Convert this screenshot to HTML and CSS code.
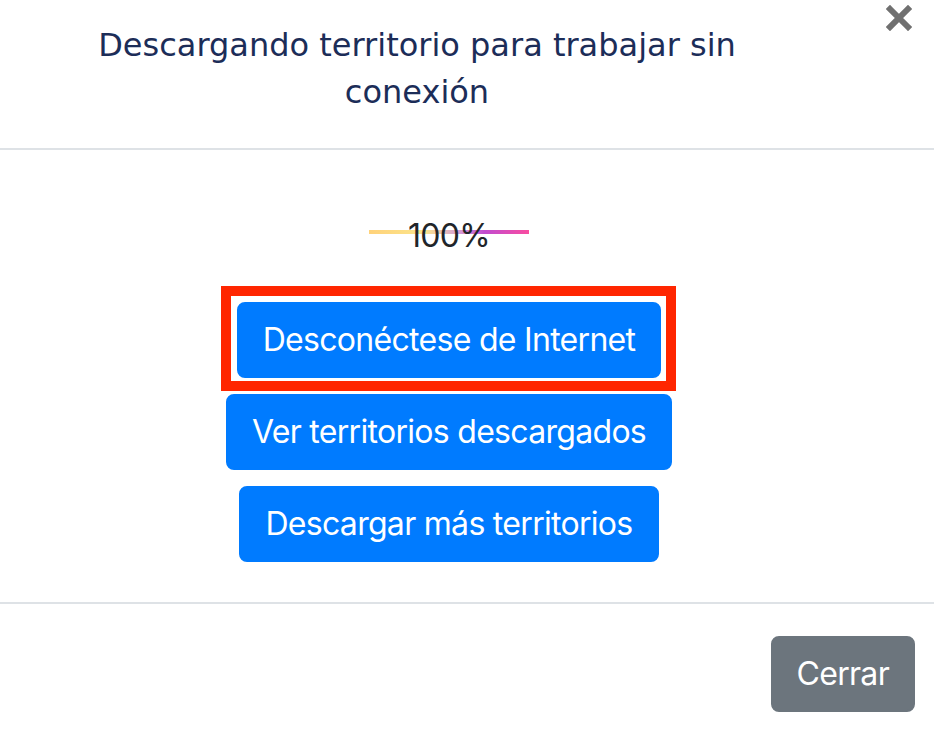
FILE: index.html
```html
<!DOCTYPE html>
<html lang="es">
<head>
<meta charset="utf-8">
<title>Descargando territorio</title>
<link rel="stylesheet" href="styles.css">
</head>
<body>
<div class="modal">
  <header class="modal-header">
    <h5 class="modal-title">Descargando territorio para trabajar sin conexión</h5>
    <button class="close" type="button" aria-label="Cerrar">
      <svg viewBox="0 0 26 26" width="26" height="26" aria-hidden="true">
        <path d="M4 4 L22 22 M22 4 L4 22" stroke="currentColor" stroke-width="6" stroke-linecap="square" fill="none"/>
      </svg>
    </button>
  </header>
  <main class="modal-body">
    <div class="progress-label">100%</div>
    <div class="actions">
      <button class="btn btn-primary btn-highlight" type="button">Desconéctese de Internet</button>
      <button class="btn btn-primary" type="button">Ver territorios descargados</button>
      <button class="btn btn-primary" type="button">Descargar más territorios</button>
    </div>
  </main>
  <footer class="modal-footer">
    <button class="btn btn-secondary" type="button">Cerrar</button>
  </footer>
</div>
</body>
</html>
```
FILE: styles.css
```css
html, body {
  margin: 0;
  padding: 0;
  background: #fff;
}

body {
  width: 934px;
  height: 730px;
  overflow: hidden;
  font-family: "Inter", "Roboto", "Liberation Sans", sans-serif;
  color: #212529;
}

.modal {
  width: 934px;
}

/* header: centred title with the dismiss cross on the right */
.modal-header {
  display: flex;
  align-items: flex-start;
  padding: 22px 0 32px 32px;
  border-bottom: 2px solid #dee2e6;
}

.modal-title {
  flex: 0 0 770px;
  box-sizing: border-box;
  padding: 0 50px;
  margin: 0;
  font-family: "DejaVu Sans", "Open Sans", sans-serif;
  font-weight: 400;
  font-size: 32px;
  line-height: 47px;
  color: #1c2d58;
  text-align: center;
}

.close {
  margin: -17px 22px 0 auto;
  padding: 0;
  border: 0;
  background: none;
  color: #707070;
  width: 26px;
  height: 26px;
  line-height: 0;
}

/* body: progress readout and stacked actions */
.modal-body {
  padding: 66px 68px 40px 32px;
}

.progress-label {
  width: 160px;
  margin: 0 auto;
  height: 40px;
  line-height: 40px;
  text-align: center;
  font-size: 32px;
  letter-spacing: -0.7px;
  background: linear-gradient(90deg, #ffd27a 0%, #fbe58c 35%, #d9a3d6 55%, #c04cd0 72%, #f94ca0 100%) center 14px / 160px 4px no-repeat;
}

.actions {
  margin-top: 46px;
  display: flex;
  flex-direction: column;
  align-items: center;
  gap: 16px;
}

.btn {
  font-family: inherit;
  font-size: 32px;
  letter-spacing: -0.7px;
  line-height: 48px;
  padding: 12px 24px;
  border: 2px solid transparent;
  border-radius: 8px;
  color: #fff;
  cursor: pointer;
}

.btn-primary {
  background: #007bff;
  border-color: #007bff;
}

.btn-secondary {
  background: #6c757d;
  border-color: #6c757d;
}

.btn-highlight {
  position: relative;
}

.btn-highlight::after {
  content: "";
  position: absolute;
  top: -18px;
  left: -18px;
  right: -17px;
  bottom: -15px;
  border: 10px solid #ff2600;
  pointer-events: none;
}

/* footer */
.modal-footer {
  display: flex;
  justify-content: flex-end;
  padding: 32px 19px 32px 32px;
  border-top: 2px solid #dee2e6;
}
```
